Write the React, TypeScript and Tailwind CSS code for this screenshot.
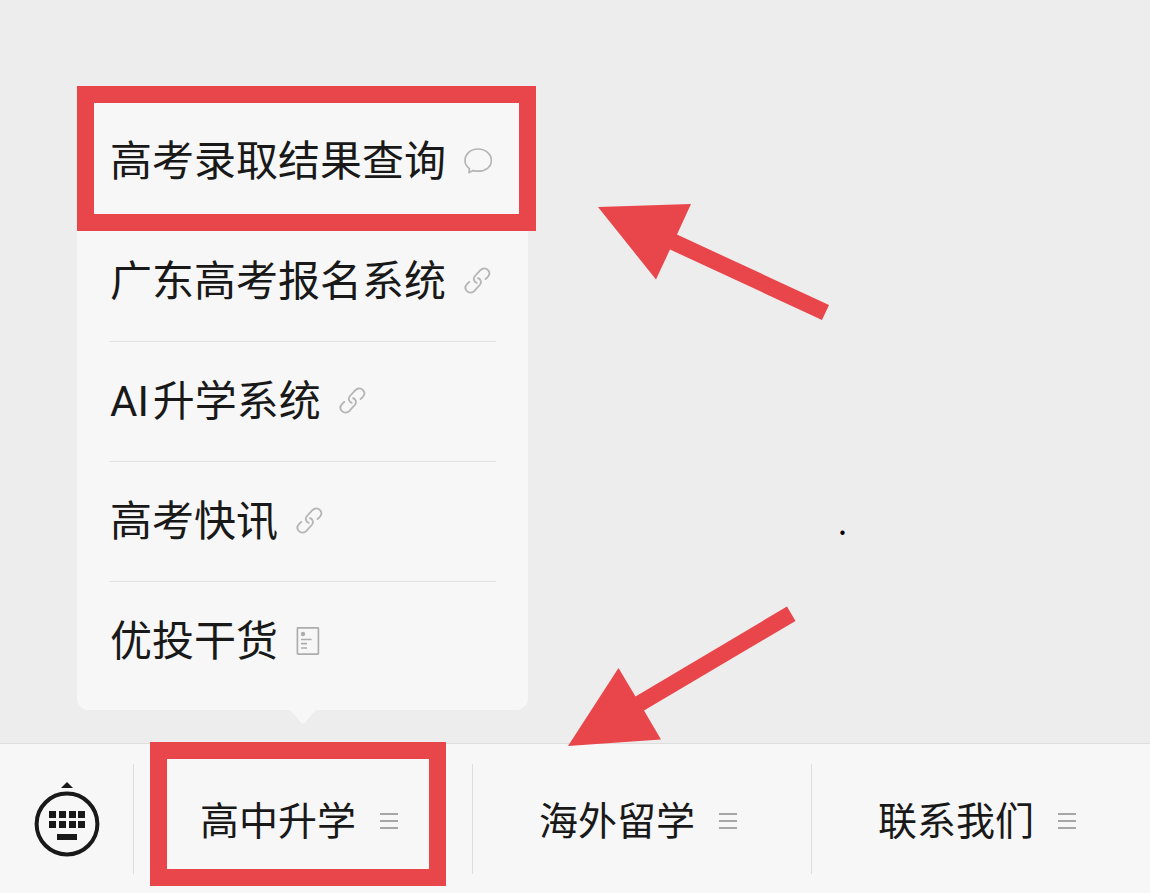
import React from "react";

type IconKind = "chat" | "link" | "article";

const menuItems: { prefix?: string; label: string; icon: IconKind }[] = [
  { label: "高考录取结果查询", icon: "chat" },
  { label: "广东高考报名系统", icon: "link" },
  { prefix: "AI", label: "升学系统", icon: "link" },
  { label: "高考快讯", icon: "link" },
  { label: "优投干货", icon: "article" },
];

const tabs = [
  { label: "高中升学", highlighted: true },
  { label: "海外留学" },
  { label: "联系我们" },
];

const ItemIcon = ({ kind }: { kind: IconKind }) => {
  switch (kind) {
    case "chat":
      return (
        <svg width="30" height="30" viewBox="0 0 30 30" fill="none" stroke="#b4b4b4" strokeWidth="1.7" strokeLinejoin="round">
          <path d="M7 26.6 L7.4 22.6 C4.4 20.6 3 17.8 3 14.6 C3 8.2 8.4 3 16 3 C23.6 3 29.4 8.2 29.4 14.6 C29.4 21 23.6 25.2 16 25.2 C14.4 25.2 12.8 25 11.2 24.6 Z" />
        </svg>
      );
    case "link":
      return (
        <svg width="30" height="30" viewBox="0 0 30 30" fill="none" stroke="#b4b4b4" strokeWidth="1.8">
          <path d="M15.4 17 C12 16.4 10.6 12.6 13 10 L18.4 4.2 C20.6 2 23.8 2 25.8 3.8 C27.8 5.8 27.8 8.6 25.8 10.8 L23 13.6" />
          <path d="M15.4 12 C18.8 12.6 20.2 16.4 17.8 19 L12.4 24.8 C10.2 27 7 27 5 25.2 C3 23.2 3 20.4 5 18.2 L7.8 15.4" />
        </svg>
      );
    case "article":
      return (
        <svg width="30" height="30" viewBox="0 0 30 30" fill="none" stroke="#adadad" strokeWidth="1.7">
          <rect x="3.4" y="1.8" width="21" height="26.4" rx="0.6" />
          <circle cx="9" cy="8" r="2.2" fill="#adadad" stroke="none" />
          <path d="M7 13.5 H17.6 M7 17.7 H13 M7 22 H13" />
        </svg>
      );
  }
};

const KeyboardIcon = () => (
  <svg width="66" height="76" viewBox="0 0 66 76" fill="#191919">
    <path d="M27 7 L33 1 L39 7 Z" />
    <circle cx="33" cy="43" r="30.4" fill="none" stroke="#191919" strokeWidth="4" />
    {[15, 25, 35, 44].map((x) => (
      <React.Fragment key={x}>
        <rect x={x} y="30" width="7" height="7" />
        <rect x={x} y="40" width="7" height="7" />
      </React.Fragment>
    ))}
    <rect x="23" y="53" width="20" height="6" />
  </svg>
);

const SubMenu = () => (
  <div className="relative ml-[77px] mb-[33px] w-[451px] rounded-xl bg-[#f7f7f7] px-8 py-2">
    <ul className="divide-y divide-[#e3e3e3]">
      {menuItems.map((item) => (
        <li key={item.label} className="h-[120px]">
          <button type="button" className="flex h-full w-full items-center gap-4 pb-0.5 pl-px text-[42px] leading-none whitespace-nowrap">
            <span className="pt-0.5">
              {item.prefix && <span className="mr-1">{item.prefix}</span>}
              {item.label}
            </span>
            <ItemIcon kind={item.icon} />
          </button>
        </li>
      ))}
    </ul>
    <svg className="absolute left-[210px] top-full" width="32" height="14" viewBox="0 0 32 14" fill="#f7f7f7">
      <path d="M0 0 C3 0 4 1 6 3 L14 12.4 Q16 14.4 18 12.4 L26 3 C28 1 29 0 32 0 Z" />
    </svg>
    <div className="pointer-events-none absolute -top-2 left-0 -right-2 h-[145px] border-[17px] border-[#e9464b]" />
  </div>
);

const TabBar = () => (
  <nav className="flex h-[150px] items-stretch border-t border-[#dedede] bg-[#f7f7f7]">
    <button type="button" aria-label="键盘" className="flex w-[133px] shrink-0 items-center justify-center">
      <KeyboardIcon />
    </button>
    {tabs.map((tab) => (
      <div key={tab.label} className="relative flex flex-1 items-center">
        <span className="h-[110px] w-px bg-[#dedede]" />
        <button type="button" className="flex h-full flex-1 items-center justify-center gap-6 pr-2 pt-1 text-[39px] leading-none whitespace-nowrap">
          <span className="pt-1">{tab.label}</span>
          <svg width="18" height="18" viewBox="0 0 18 18" stroke="#a6a6a6" strokeWidth="2">
            <path d="M0 2 H18 M0 9 H18 M0 16 H18" />
          </svg>
        </button>
        {tab.highlighted && (
          <div className="pointer-events-none absolute -top-0.5 bottom-[7px] left-[17px] right-[26px] border-[17px] border-[#e9464b]" />
        )}
      </div>
    ))}
  </nav>
);

const App = () => {
  return (
    <main className="relative flex min-h-screen flex-col bg-[#ededed] font-[Roboto,'Noto_Sans_CJK_SC',sans-serif] text-[#191919]">
      <div className="flex flex-1 flex-col justify-end">
        <SubMenu />
      </div>
      <TabBar />

      {/* callout arrows */}
      <svg className="pointer-events-none absolute left-[598px] top-[204px]" width="232" height="117" viewBox="0 0 232 117" fill="#e9464b">
        <path d="M0 3 L93 0 L79 30.5 L231 101 L224 116 L72 45.5 L58 75.5 Z" />
      </svg>
      <svg className="pointer-events-none absolute left-[568px] top-[606px]" width="228" height="140" viewBox="0 0 228 140" fill="#e9464b">
        <path d="M0 140 L50.5 62 L67.5 90.5 L219 0.5 L227.5 15 L76 104.5 L93 133.5 Z" />
      </svg>
      <span className="absolute left-[838px] top-[505px] font-['Noto_Sans_CJK_SC',sans-serif] text-[32px] leading-8 text-black">.</span>
    </main>
  );
};

export default App;
